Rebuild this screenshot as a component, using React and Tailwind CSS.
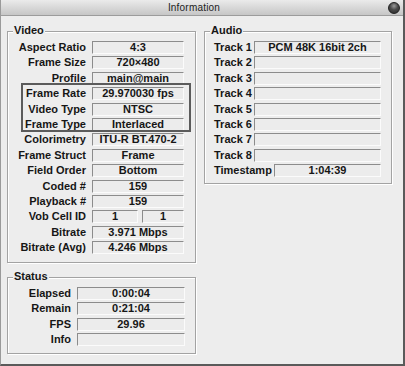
import React from "react";

const font = { fontFamily: '"Liberation Sans", Arial, sans-serif' };

function Box({ children, className = "" }) {
  return (
    <div
      className={
        "h-[13px] flex items-center justify-center bg-[#ececec] border-t border-l border-t-[#8c8c8c] border-l-[#8c8c8c] border-b border-r border-b-[#fbfbfb] border-r-[#fbfbfb] text-[11px] leading-none font-bold text-[#161616] " +
        className
      }
    >
      {children}
    </div>
  );
}

function Group({ title, className = "", children }) {
  return (
    <div
      className={
        "relative border border-[#a3a3a3] shadow-[1px_1px_0_#ffffff,inset_1px_1px_0_#ffffff] " +
        className
      }
    >
      <div className="absolute left-[5px] top-[-8px] px-[1px] bg-[#ededed] text-[11px] leading-[13px] font-bold text-[#161616]">
        {title}
      </div>
      {children}
    </div>
  );
}

function VRow({ label, value, labelW = "w-[78px]", boxW = "w-[92px]" }) {
  return (
    <div className="flex items-center h-[13px]">
      <div
        className={
          labelW +
          " text-right text-[11px] leading-none font-bold text-[#161616] whitespace-nowrap"
        }
      >
        {label}
      </div>
      <div className="w-[6px]" />
      <Box className={boxW}>{value}</Box>
    </div>
  );
}

export default function App() {
  const video = [
    ["Aspect Ratio", "4:3"],
    ["Frame Size", "720\u00d7480"],
    ["Profile", "main@main"],
    ["Frame Rate", "29.970030 fps"],
    ["Video Type", "NTSC"],
    ["Frame Type", "Interlaced"],
    ["Colorimetry", "ITU-R BT.470-2"],
    ["Frame Struct", "Frame"],
    ["Field Order", "Bottom"],
    ["Coded #", "159"],
    ["Playback #", "159"],
    ["Vob Cell ID", null],
    ["Bitrate", "3.971 Mbps"],
    ["Bitrate (Avg)", "4.246 Mbps"],
  ];
  const status = [
    ["Elapsed", "0:00:04"],
    ["Remain", "0:21:04"],
    ["FPS", "29.96"],
    ["Info", ""],
  ];
  const tracks = [
    ["Track 1", "PCM 48K 16bit 2ch"],
    ["Track 2", ""],
    ["Track 3", ""],
    ["Track 4", ""],
    ["Track 5", ""],
    ["Track 6", ""],
    ["Track 7", ""],
    ["Track 8", ""],
  ];

  return (
    <div
      style={font}
      className="w-[405px] h-[366px] flex flex-col bg-[#ededed] border-l border-l-[#9a9a9a] border-r-2 border-r-[#5a5a5a] border-b-2 border-b-[#5a5a5a] overflow-hidden"
    >
      {/* Title bar */}
      <div className="h-[16px] flex items-center bg-gradient-to-b from-[#ebebeb] to-[#c6c6c6] border-b border-b-[#9c9c9c] pr-[16px] relative">
        <div className="flex-1 text-center text-[10px] leading-none text-[#222222] tracking-[0.2px]">
          Information
        </div>
        <div className="absolute right-[3px] top-[2px] w-[12px] h-[12px] rounded-full bg-[radial-gradient(circle_at_50%_30%,#9a9a9a_0%,#4a4a4a_45%,#2a2a2a_100%)] border border-[#222222]" />
      </div>

      {/* Body */}
      <div className="flex pl-[6px] pt-[15px]">
        {/* Left column */}
        <div className="flex flex-col w-[189px]">
          <Group title="Video" className="h-[232px] pt-[9px]">
            <div className="relative flex flex-col gap-[2.4px]">
              {video.map(([l, v]) =>
                v === null ? (
                  <div key={l} className="flex items-center h-[13px]">
                    <div className="w-[78px] text-right text-[11px] leading-none font-bold text-[#161616] whitespace-nowrap">
                      {l}
                    </div>
                    <div className="w-[6px]" />
                    <div className="flex w-[92px] gap-[4px]">
                      <Box className="w-[46px]">1</Box>
                      <Box className="flex-1">1</Box>
                    </div>
                  </div>
                ) : (
                  <VRow key={l} label={l} value={v} />
                )
              )}
              <div className="absolute left-[13px] right-[4px] top-[42px] h-[49px] border-2 border-[#5b5b5b] pointer-events-none" />
            </div>
          </Group>

          <Group title="Status" className="mt-[14px] h-[77px] pt-[9px]">
            <div className="flex flex-col gap-[2.4px]">
              {status.map(([l, v]) => (
                <VRow key={l} label={l} value={v} labelW="w-[63px]" boxW="w-[108px]" />
              ))}
            </div>
          </Group>
        </div>

        {/* Right column */}
        <div className="ml-[8px] w-[188px]">
          <Group title="Audio" className="h-[153px] pt-[9px] pl-[9px]">
            <div className="flex flex-col gap-[2.4px]">
              {tracks.map(([l, v]) => (
                <div key={l} className="flex items-center h-[13px]">
                  <div className="w-[40px] text-[11px] leading-none font-bold text-[#161616] whitespace-nowrap">
                    {l}
                  </div>
                  <Box className="w-[127px]">{v}</Box>
                </div>
              ))}
              <div className="flex items-center h-[13px]">
                <div className="w-[60px] text-[11px] leading-none font-bold text-[#161616] whitespace-nowrap">
                  Timestamp
                </div>
                <Box className="w-[107px]">1:04:39</Box>
              </div>
            </div>
          </Group>
        </div>
      </div>
    </div>
  );
}
